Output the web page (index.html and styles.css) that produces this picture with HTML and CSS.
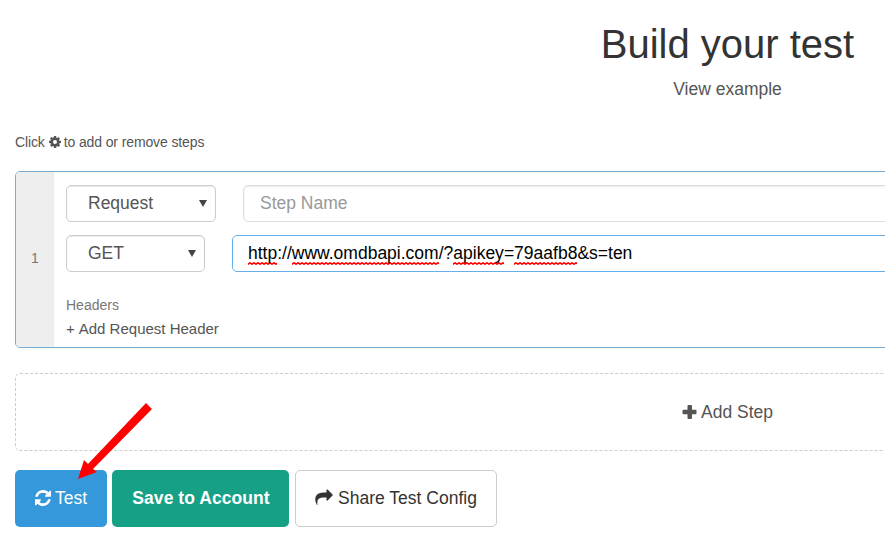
FILE: index.html
```html
<!DOCTYPE html>
<html lang="en">
<head>
<meta charset="utf-8">
<title>Build your test</title>
<link rel="stylesheet" href="styles.css">
</head>
<body>
<main class="page">
  <header class="intro">
    <h1>Build your test</h1>
    <a class="example">View example</a>
  </header>
  <p class="hint"><span>Click</span><svg class="gear" viewBox="0 0 1536 1536"><path fill-rule="evenodd" d="M1024 768a256 256 0 1 0-512 0 256 256 0 0 0 512 0zM1536 659v222q0 24-20 28l-185 28q-19 54-39 91 35 50 107 138 10 12 10 25t-9 23q-27 37-99 108t-94 71q-12 0-26-9l-138-108q-44 23-91 38-16 136-29 186-7 28-36 28H665q-14 0-24.500-8.500T629 1498l-28-184q-49-16-90-37l-141 107q-10 9-25 9-14 0-25-11-126-114-165-168-7-10-7-23 0-12 8-23 15-21 51-66.500t54-70.500q-27-50-41-99L29 904q-13-2-21-12.500T0 868V646q0-13 8-23t19-12l186-28q14-46 39-92-40-57-107-138-10-12-10-24 0-10 9-23 26-36 98.500-107.500T337 127q13 0 26 10l138 107q44-23 91-38 16-136 29-186 7-28 36-28h222q14 0 24.500 8.500T915 30l28 184q49 16 90 37l142-107q9-9 24-9 13 0 25 10 129 119 165 170 7 8 7 22 0 12-8 23-15 21-51 66.500t-54 70.500q26 50 41 98l183 28q13 2 21 12.500t8 23.500z"/></svg><span>to add or remove steps</span></p>

  <section class="step">
    <div class="number">1</div>
    <div class="fields">
      <div class="row">
        <div class="control select request">Request<i class="caret"></i></div>
        <div class="control input placeholder">Step Name</div>
      </div>
      <div class="row">
        <div class="control select method">GET<i class="caret"></i></div>
        <div class="control input url"><span class="typo">http</span>://<span class="typo">www.omdbapi.com</span>/?<span class="typo">apikey</span>=<span class="typo">79aafb8</span>&amp;s=ten</div>
      </div>
      <div class="headers">Headers</div>
      <a class="add-header"><span>+</span><span>Add Request Header</span></a>
    </div>
  </section>

  <div class="add-step"><svg class="plus" viewBox="0 0 14 14"><path d="M6 0h2.500q1 0 1 1v3.700h3.500q1 0 1 1v2.600q0 1-1 1H9.500V13q0 1-1 1H6q-1 0-1-1V9.300H1q-1 0-1-1V5.700q0-1 1-1h4V1q0-1 1-1z"/></svg><span>Add Step</span></div>

  <div class="actions">
    <button class="button test"><svg class="refresh" viewBox="0 0 1536 1536"><path d="M1511 928q0 5-1 7-64 268-268 434.500T764 1536q-146 0-282.500-55T238 1324l-129 129q-19 19-45 19t-45-19-19-45V960q0-26 19-45t45-19h448q26 0 45 19t19 45-19 45l-137 137q71 66 161 102t187 36q134 0 250-65t186-179q11-17 53-117 8-23 30-23h192q13 0 22.500 9.500t9.500 22.500zM1536 128v448q0 26-19 45t-45 19h-448q-26 0-45-19t-19-45 19-45l138-138Q969 256 768 256q-134 0-250 65T332 500q-11 17-53 117-8 23-30 23H50q-13 0-22.500-9.500T18 608v-7q65-268 270-434.500T768 0q146 0 284 55.500T1297 212l130-129q19-19 45-19t45 19 19 45z"/></svg><span>Test</span></button>
    <button class="button save">Save to Account</button>
    <button class="button share"><svg class="forward" viewBox="0 0 1792 1536"><path d="M1792 512q0 26-19 45l-512 512q-19 19-45 19t-45-19-19-45V768H928q-98 0-175.500 6t-154 21.500-133 42.500-105.500 69.500-80 101-48.500 138.500-17.500 181q0 55 5 123 0 6 2.500 23.500t2.500 26.500q0 15-8.500 25t-23.500 10q-16 0-28-17-7-9-13-22t-13.500-30-10.500-24Q0 1158 0 992q0-199 53-333Q215 256 928 256h224V0q0-26 19-45t45-19 45 19l512 512q19 19 19 45z"/></svg><span>Share Test Config</span></button>
    <svg class="arrow" viewBox="0 0 76 78"><path d="M1 77 7 58 11 62 69 1 75 7 16 67 20 70z"/></svg>
  </div>
</main>
</body>
</html>
```
FILE: styles.css
```css
* { box-sizing: border-box; }
html { overflow: hidden; }
body {
  margin: 0;
  background: #fff;
  color: #555;
  font: 14px/20px "Liberation Sans", Arial, sans-serif;
}
.page { width: 1440px; height: 548px; padding: 20px 0 0 15px; overflow: hidden; }
.intro { text-align: center; }
h1 { margin: 0; color: #333; font-size: 40px; font-weight: 400; line-height: 48px; }
.example { display: block; margin-top: 10px; font-size: 17.5px; line-height: 22px; }
.hint { display: flex; align-items: center; margin: 32px 0 19px; letter-spacing: -.12px; }
svg { display: block; fill: currentColor; flex: none; overflow: visible; }
.gear { width: 12px; height: 12px; margin: 0 3px 0 4px; }
.step {
  display: flex;
  height: 177px;
  border: 1px solid #7badd2;
  border-radius: 5px;
  overflow: hidden;
}
.number {
  display: flex;
  align-items: center;
  justify-content: center;
  width: 38px;
  padding-bottom: 3px;
  background: #eee;
  color: #777;
}
.fields { flex: 1; padding: 13px 12px 0; }
.row { display: flex; margin-bottom: 13px; }
.control {
  display: flex;
  align-items: center;
  height: 37px;
  border: 1px solid #ccc;
  border-radius: 5px;
  padding-bottom: 1px;
  font-size: 17.5px;
}
.select { justify-content: space-between; padding-left: 21px; padding-right: 8px; box-shadow: inset 0 1px 1px rgba(0,0,0,.08); }
.request { width: 150px; margin-right: 27px; }
.method { width: 139px; margin-right: 27px; }
.caret { margin-top: 1px; border: 4px solid transparent; border-top: 7px solid #444; border-bottom: 0; }
.input { flex: 1; padding-left: 16px; }
.placeholder { color: #999; border-color: #ddd; box-shadow: inset 0 1px 2px rgba(0,0,0,.08); }
.url { padding-left: 15px; border-color: #66afe9; color: #000; }
.typo {
  padding-bottom: 2px;
  margin-bottom: -2px;
  background: url("data:image/svg+xml,%3Csvg xmlns='http://www.w3.org/2000/svg' width='4' height='3'%3E%3Cpath d='M-1 1 0 2.200 2 .8 4 2.200 5 1' fill='none' stroke='red' stroke-width='1.500'/%3E%3C/svg%3E") repeat-x left bottom;
}
.headers { margin-top: 23px; color: #777; }
.add-header { display: flex; gap: 4px; margin-top: 4px; font-size: 15px; }
.add-step {
  display: flex;
  align-items: center;
  justify-content: center;
  height: 78px;
  margin-top: 25px;
  border: 1px dashed #ccc;
  border-radius: 5px;
  font-size: 17.5px;
}
.plus { width: 15px; height: 14px; margin-right: 4px; }
.actions { position: relative; display: flex; margin-top: 19px; }
.button {
  display: flex;
  align-items: center;
  justify-content: center;
  height: 57px;
  margin: 0;
  padding: 0 0 2px;
  border: 0;
  border-radius: 5px;
  color: #fff;
  font: 17.5px/22px "Liberation Sans", Arial, sans-serif;
}
.test { width: 92px; background: #3498db; }
.save { width: 177px; margin-left: 5px; padding-left: 1px; background: #16a085; font-weight: 700; letter-spacing: .06px; }
.share { width: 202px; margin-left: 6px; border: 1px solid #ccc; background: #fff; color: #333; }
.refresh { width: 16px; height: 16px; margin-right: 4px; }
.forward { width: 18px; height: 15px; margin-right: 5px; }
.arrow { position: absolute; left: 62px; top: -68px; width: 76px; height: 78px; fill: #f00; }
```
